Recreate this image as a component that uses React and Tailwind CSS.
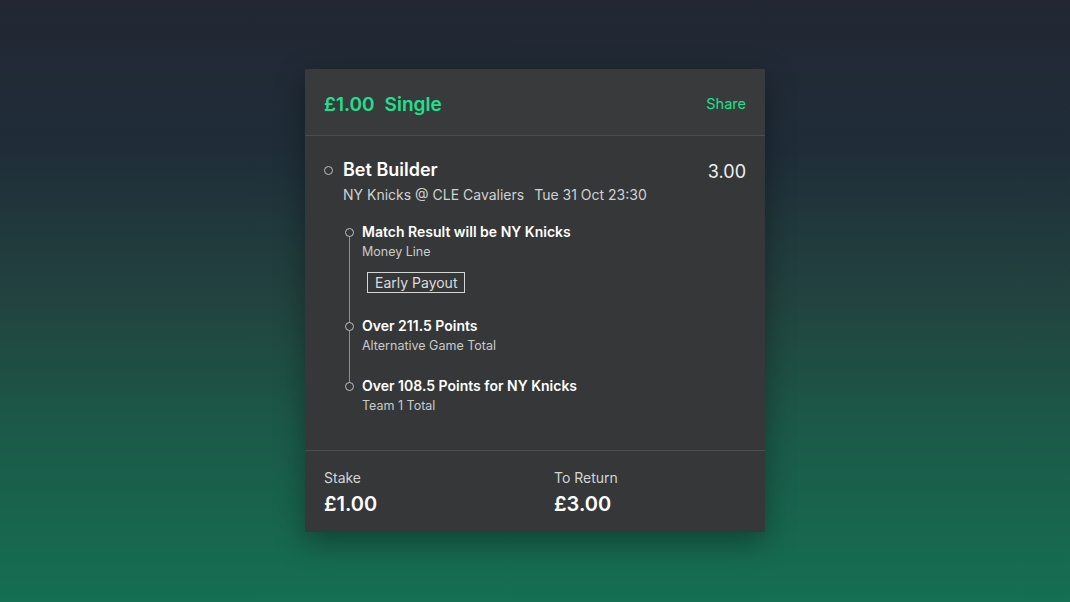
const legs = [
  { title: 'Match Result will be NY Knicks', market: 'Money Line', earlyPayout: true },
  { title: 'Over 211.5 Points', market: 'Alternative Game Total' },
  { title: 'Over 108.5 Points for NY Knicks', market: 'Team 1 Total' },
];

const Dot = ({ className = '' }) => (
  <span className={`block w-[9px] h-[9px] rounded-full border-[1.5px] border-[#bfc1c1] bg-[#353738] ${className}`} />
);

const Leg = ({ leg }) => (
  <div className="relative flex">
    <div className="w-[20px] shrink-0 flex justify-center">
      <Dot className="relative mt-[6px]" />
    </div>
    <div className="ml-[3px]">
      <div className="text-[14px] leading-[20px] font-semibold text-white">{leg.title}</div>
      <div className="mt-[1px] text-[12.5px] leading-[18px] text-[#c9cbcb]">{leg.market}</div>
      {leg.earlyPayout && (
        <div className="mt-[11px] mb-[2px] ml-[5px] inline-block border-[1.5px] border-[#d4d6d6] px-[7px] text-[14px] leading-[19px] text-[#dcdede]">
          Early Payout
        </div>
      )}
    </div>
  </div>
);

export default function App() {
  return (
    <div
      className="w-[1070px] h-[602px] flex justify-center pt-[69px] bg-[linear-gradient(180deg,#222733_0%,#1f2d38_25%,#22433f_50%,#1b5a48_72%,#156f52_100%)]"
      style={{ fontFamily: 'Inter, "Noto Sans", sans-serif' }}
    >
      <div className="w-[460px] h-[463px] flex flex-col bg-[#353738] rounded-[2px] shadow-[0_10px_30px_rgba(0,0,0,0.35)]">
        <div className="h-[67px] flex items-center justify-between px-[19px] pt-[3px] bg-[#383a3b] border-b border-[#4b4e4e] rounded-t-[2px]">
          <div className="mt-[3px] flex items-baseline gap-[10px] text-[19px] font-semibold text-[#20e08e]">
            <span>£1.00</span>
            <span>Single</span>
          </div>
          <span className="text-[14.5px] text-[#20e08e]">Share</span>
        </div>

        <div className="flex-1 px-[19px] pt-[21px]">
          <div className="flex justify-between">
            <div className="flex items-start">
              <Dot className="mt-[9px]" />
              <div className="ml-[10px]">
                <div className="text-[18px] leading-[26px] font-semibold text-white">Bet Builder</div>
                <div className="mt-[2px] text-[14px] leading-[20px] text-[#d0d2d2]">
                  NY Knicks @ CLE Cavaliers<span className="ml-[10px]">Tue 31 Oct 23:30</span>
                </div>
              </div>
            </div>
            <div className="mt-[2px] text-[18px] leading-[26px] text-[#f0f0f0]">3.00</div>
          </div>

          <div className="relative mt-[17px] ml-[15px] flex flex-col gap-[21px]">
            <span className="absolute left-[9.5px] top-[11px] bottom-[28px] w-[1.5px] bg-[#8d8f8f]" />
            {legs.map((leg) => (
              <Leg key={leg.title} leg={leg} />
            ))}
          </div>
        </div>

        <div className="h-[82px] border-t border-[#4b4e4e] px-[19px] pt-[17px] flex">
          <div className="w-[230px]">
            <div className="text-[14px] leading-[20px] text-[#d3d5d5]">Stake</div>
            <div className="mt-[3px] text-[20px] leading-[26px] font-semibold text-white">£1.00</div>
          </div>
          <div>
            <div className="text-[14px] leading-[20px] text-[#d3d5d5]">To Return</div>
            <div className="mt-[3px] text-[20px] leading-[26px] font-semibold text-white">£3.00</div>
          </div>
        </div>
      </div>
    </div>
  );
}
